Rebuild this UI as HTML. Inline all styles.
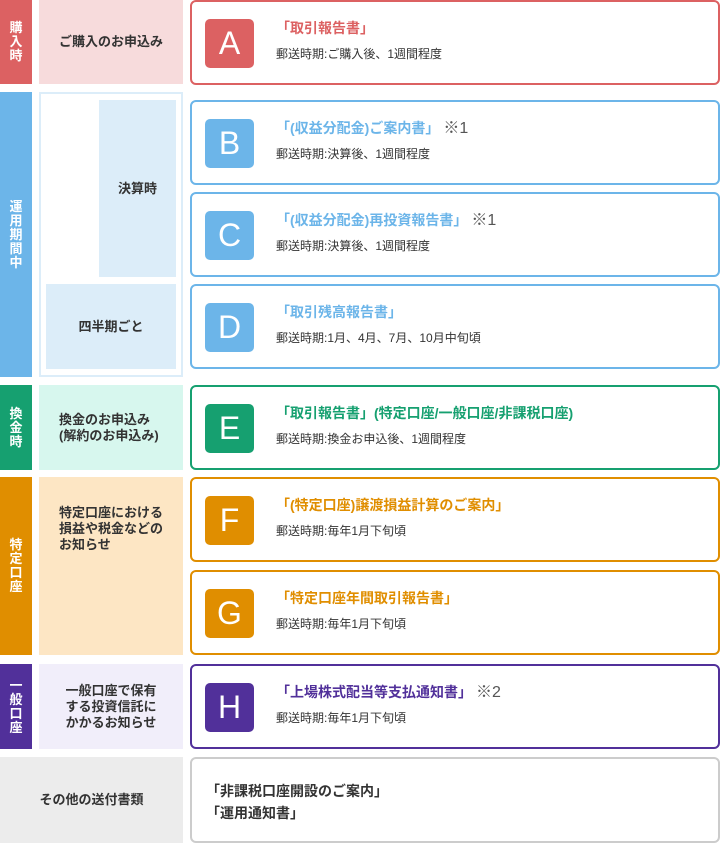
<!DOCTYPE html>
<html><head><meta charset="utf-8"><style>
*{margin:0;padding:0;box-sizing:border-box}
body{width:720px;height:844px;background:#fff;position:relative;font-family:"Liberation Sans","Noto Sans CJK JP",sans-serif;color:#333;overflow:hidden}
.a{position:absolute}
.bar{position:absolute;left:0;width:32px;color:#fff;font-weight:bold;font-size:13px;line-height:14px;display:flex;align-items:center;justify-content:center;text-align:center}
.bar span{width:14px;word-break:break-all}
.mid{position:absolute;font-weight:bold;font-size:13px;line-height:16px;display:flex;align-items:center;justify-content:center;text-align:left}
.card{position:absolute;left:190px;width:530px;height:85px;border:2px solid;border-radius:6px;background:#fff}
.ic{position:absolute;left:13px;top:17px;width:49px;height:49px;border-radius:5px;color:#fff;font-size:32px;line-height:49px;text-align:center;font-weight:300}
.t{position:absolute;left:84px;top:16px;font-size:14px;font-weight:bold;white-space:nowrap;line-height:20px}
.t em{font-style:normal;font-weight:normal;color:#555;font-size:16px;margin-left:4px}
.s{position:absolute;left:84px;top:43px;font-size:12px;color:#333;white-space:nowrap;line-height:18px}
</style></head><body>

<div class="bar" style="top:0;height:84px;background:#dc6162"><span>購入時</span></div>
<div class="mid" style="left:39px;top:0;width:144px;height:84px;background:#f7dbdc">ご購入のお申込み</div>
<div class="card" style="top:0;border-color:#dc6162"><div class="ic" style="background:#dc6162">A</div><div class="t" style="color:#dc6162">「取引報告書」</div><div class="s">郵送時期:ご購入後、1週間程度</div></div>

<div class="bar" style="top:92px;height:285px;background:#6cb5e9"><span>運用期間中</span></div>
<div class="a" style="left:39px;top:92px;width:144px;height:285px;border:2px solid #dcedf9"></div>
<div class="mid" style="left:99px;top:100px;width:77px;height:177px;background:#dcedf9;justify-content:center">決算時</div>
<div class="mid" style="left:46px;top:284px;width:130px;height:85px;background:#dcedf9">四半期ごと</div>
<div class="card" style="top:100px;border-color:#6cb5e9"><div class="ic" style="background:#6cb5e9">B</div><div class="t" style="color:#6cb5e9">「(収益分配金)ご案内書」<em>※1</em></div><div class="s">郵送時期:決算後、1週間程度</div></div>
<div class="card" style="top:192px;border-color:#6cb5e9"><div class="ic" style="background:#6cb5e9">C</div><div class="t" style="color:#6cb5e9">「(収益分配金)再投資報告書」<em>※1</em></div><div class="s">郵送時期:決算後、1週間程度</div></div>
<div class="card" style="top:284px;border-color:#6cb5e9"><div class="ic" style="background:#6cb5e9">D</div><div class="t" style="color:#6cb5e9">「取引残高報告書」</div><div class="s">郵送時期:1月、4月、7月、10月中旬頃</div></div>

<div class="bar" style="top:385px;height:85px;background:#16a070"><span>換金時</span></div>
<div class="mid" style="left:39px;top:385px;width:144px;height:85px;background:#d7f7ee;justify-content:flex-start;padding-left:20px">換金のお申込み<br>(解約のお申込み)</div>
<div class="card" style="top:385px;border-color:#16a070"><div class="ic" style="background:#16a070">E</div><div class="t" style="color:#16a070">「取引報告書」(特定口座/一般口座/非課税口座)</div><div class="s">郵送時期:換金お申込後、1週間程度</div></div>

<div class="bar" style="top:477px;height:178px;background:#e08e00"><span>特定口座</span></div>
<div class="mid" style="left:39px;top:477px;width:144px;height:178px;background:#fde6c4;align-items:flex-start;justify-content:flex-start;padding:28px 0 0 20px">特定口座における<br>損益や税金などの<br>お知らせ</div>
<div class="card" style="top:477px;border-color:#e08e00"><div class="ic" style="background:#e08e00">F</div><div class="t" style="color:#e08e00">「(特定口座)譲渡損益計算のご案内」</div><div class="s">郵送時期:毎年1月下旬頃</div></div>
<div class="card" style="top:570px;border-color:#e08e00"><div class="ic" style="background:#e08e00">G</div><div class="t" style="color:#e08e00">「特定口座年間取引報告書」</div><div class="s">郵送時期:毎年1月下旬頃</div></div>

<div class="bar" style="top:664px;height:85px;background:#51309a"><span>一般口座</span></div>
<div class="mid" style="left:39px;top:664px;width:144px;height:85px;background:#f1eefa;text-align:center">一般口座で保有<br>する投資信託に<br>かかるお知らせ</div>
<div class="card" style="top:664px;border-color:#51309a"><div class="ic" style="background:#51309a">H</div><div class="t" style="color:#51309a">「上場株式配当等支払通知書」<em>※2</em></div><div class="s">郵送時期:毎年1月下旬頃</div></div>

<div class="mid" style="left:0;top:757px;width:183px;height:86px;background:#ececec">その他の送付書類</div>
<div class="card" style="top:757px;height:86px;border-color:#ccc"><div class="a" style="left:14px;top:21px;font-size:14px;font-weight:bold;line-height:22px;color:#333">「非課税口座開設のご案内」<br>「運用通知書」</div></div>

</body></html>
